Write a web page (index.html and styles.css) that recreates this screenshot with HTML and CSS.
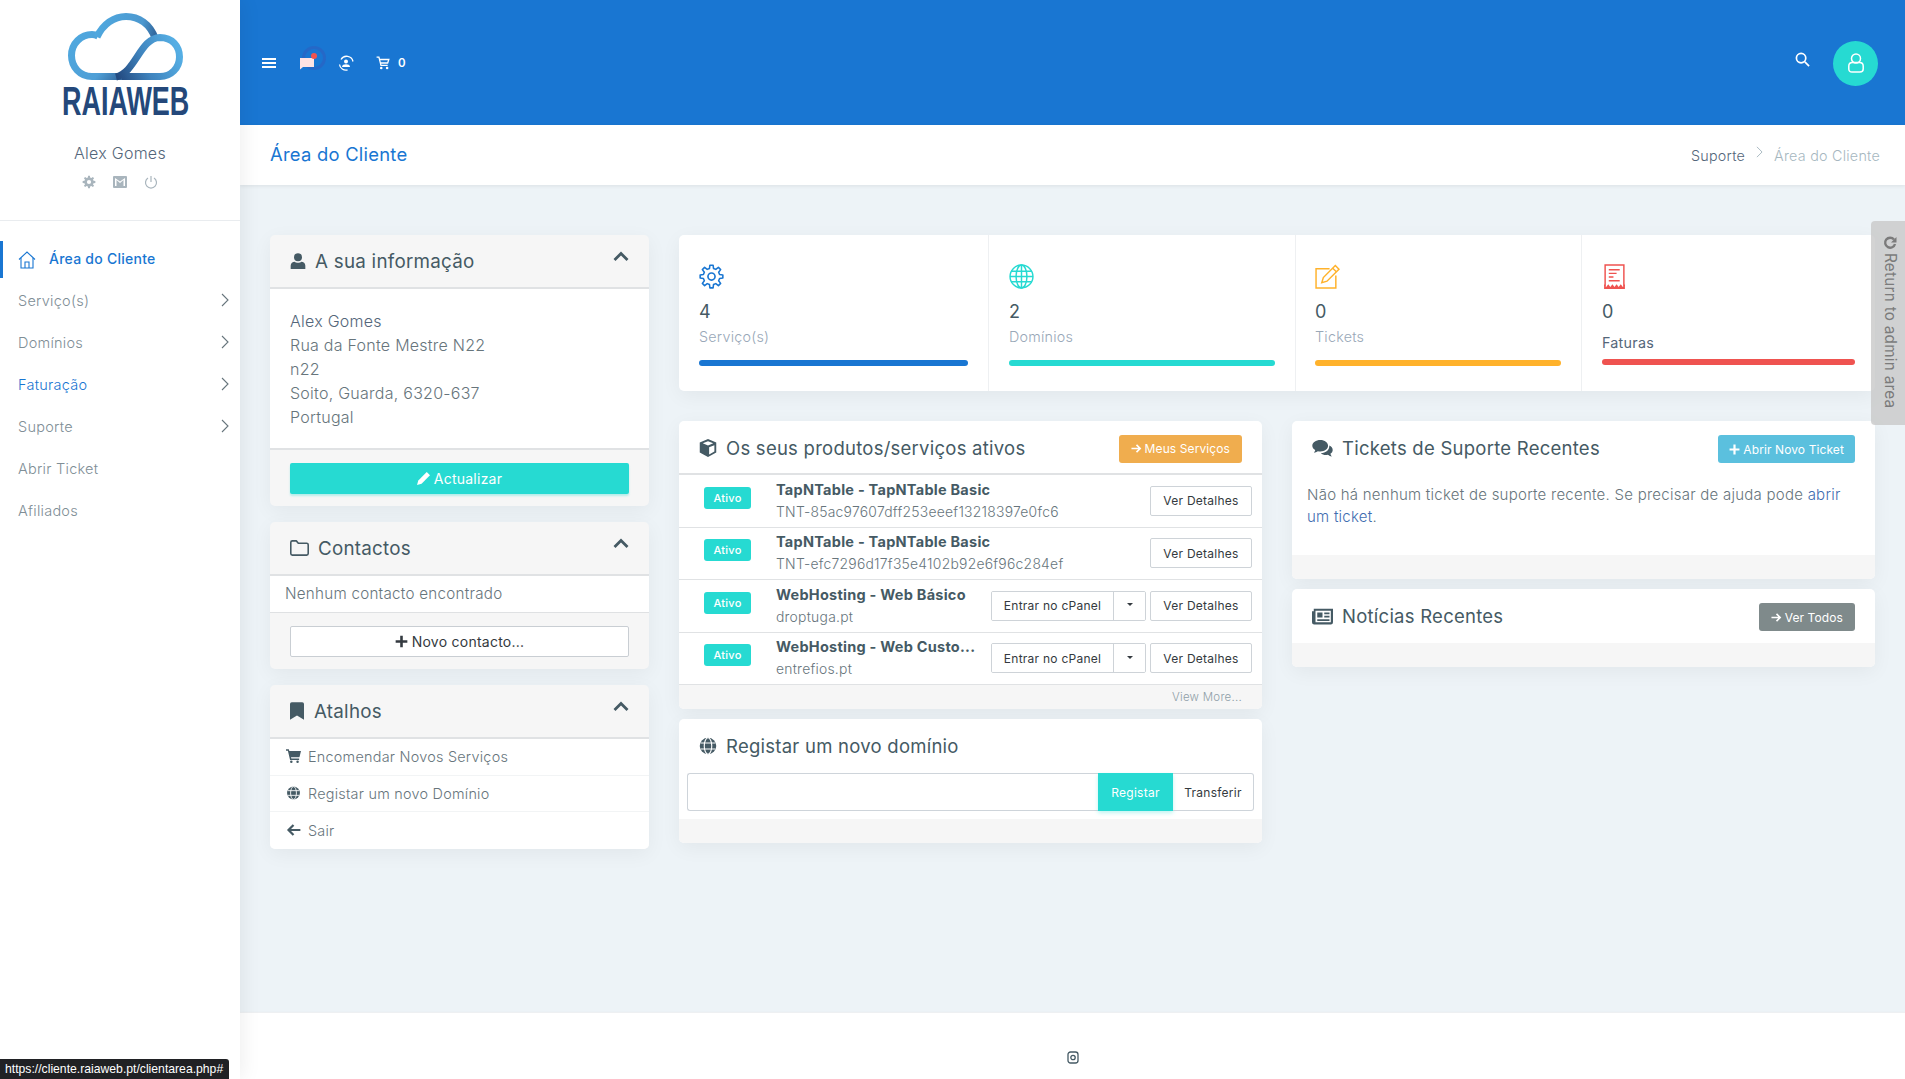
FILE: index.html
```html
<!DOCTYPE html>
<html lang="pt">
<head>
    <meta charset="UTF-8">
    <meta name="viewport" content="width=device-width, initial-scale=1.0">
    <title>Área do Cliente - Raiaweb</title>
    <link rel="stylesheet" href="styles.css">
</head>
<body>
    <!-- icon sprite -->
    <svg class="sprite" aria-hidden="true">
        <symbol id="i-gear" viewBox="0 0 24 24"><path fill-rule="evenodd" d="M10.06 4.24 10.47 1.11H13.53L13.94 4.24 16.12 5.14 18.62 3.22 20.78 5.38 18.86 7.88 19.76 10.06 22.89 10.47V13.53L19.76 13.94 18.86 16.12 20.78 18.62 18.62 20.78 16.12 18.86 13.94 19.76 13.53 22.89H10.47L10.06 19.76 7.88 18.86 5.38 20.78 3.22 18.62 5.14 16.12 4.24 13.94 1.11 13.53V10.47L4.24 10.06 5.14 7.88 3.22 5.38 5.38 3.22 7.88 5.14ZM12 8.4A3.6 3.6 0 1 0 12 15.6 3.6 3.6 0 1 0 12 8.4Z"/></symbol>
        <symbol id="i-gear-line" viewBox="0 0 24 24"><path fill="none" stroke="currentColor" stroke-width="1.5" stroke-linejoin="round" d="M10.06 4.24 10.47 1.11H13.53L13.94 4.24 16.12 5.14 18.62 3.22 20.78 5.38 18.86 7.88 19.76 10.06 22.89 10.47V13.53L19.76 13.94 18.86 16.12 20.78 18.62 18.62 20.78 16.12 18.86 13.94 19.76 13.53 22.89H10.47L10.06 19.76 7.88 18.86 5.38 20.78 3.22 18.62 5.14 16.12 4.24 13.94 1.11 13.53V10.47L4.24 10.06 5.14 7.88 3.22 5.38 5.38 3.22 7.88 5.14Z"/><circle cx="12" cy="12" r="3.4" fill="none" stroke="currentColor" stroke-width="1.6"/></symbol>
        <symbol id="i-globe-line" viewBox="0 0 24 24"><g fill="none" stroke="currentColor" stroke-width="1.4"><circle cx="12" cy="12" r="11"/><ellipse cx="12" cy="12" rx="5.2" ry="11"/><path d="M12 1V23M2.2 7H21.8M1 12H23M2.2 17H21.8"/></g></symbol>
        <symbol id="i-globe" viewBox="0 0 24 24"><circle cx="12" cy="12" r="11"/><g fill="none" stroke="#fff" stroke-width="1.5"><ellipse cx="12" cy="12" rx="5" ry="11"/><path d="M2 8H22M2 16H22"/></g></symbol>
        <symbol id="i-edit" viewBox="0 0 24 24"><g fill="none" stroke="currentColor" stroke-width="1.4"><path d="M14 4.5H1V23H20V11"/><path d="M19.5 1.5 23 5 11.5 16.5 6.5 18 8 13Z"/><path d="M17 4 20.5 7.5"/></g></symbol>
        <symbol id="i-receipt" viewBox="0 0 20 24"><g fill="none" stroke="currentColor" stroke-width="1.4"><path d="M1 21V1H19V21"/><path d="M4.500 5.500H15M4.500 9H12M4.500 12.500H9M4.500 16H15"/></g><path fill="currentColor" d="M0 19 2 22 4 19.500 6 22 8 19.500 10 22 12 19.500 14 22 16 19.500 18 22 20 19V24H0Z"/></symbol>
        <symbol id="i-user" viewBox="0 0 24 24"><circle cx="12" cy="6.500" r="6"/><path d="M1 24V19C1 15 4 13 7 13 9 15 15 15 17 13 20 13 23 15 23 19V24Z"/></symbol>
        <symbol id="i-folder" viewBox="0 0 24 20"><path fill="none" stroke="currentColor" stroke-width="2" stroke-linejoin="round" d="M1 3A2 2 0 0 1 3 1H8L10.500 4H21A2 2 0 0 1 23 6V17A2 2 0 0 1 21 19H3A2 2 0 0 1 1 17Z"/></symbol>
        <symbol id="i-bookmark" viewBox="0 0 16 20"><path d="M2 0H14A2 2 0 0 1 16 2V20L8 15 0 20V2A2 2 0 0 1 2 0Z"/></symbol>
        <symbol id="i-cart" viewBox="0 0 24 22"><path d="M0 0H4.500L5.300 3H24L21.500 13H8L8.500 15H21V17.500H6.500L3 2.500H0Z"/><circle cx="8.500" cy="20" r="2"/><circle cx="18.500" cy="20" r="2"/></symbol>
        <symbol id="i-cart-line" viewBox="0 0 24 24"><g fill="none" stroke="currentColor" stroke-width="2.2"><path d="M1 2H5L8.500 16H20"/><path d="M6 6H22L20 12H7.500"/></g><circle cx="9" cy="20.500" r="2.200"/><circle cx="19" cy="20.500" r="2.200"/></symbol>
        <symbol id="i-arrow-left" viewBox="0 0 24 20"><path fill="none" stroke="currentColor" stroke-width="3.500" d="M12 2 4 10 12 18M4 10H23"/></symbol>
        <symbol id="i-arrow-right" viewBox="0 0 24 20"><path fill="none" stroke="currentColor" stroke-width="3.500" d="M12 2 20 10 12 18M20 10H1"/></symbol>
        <symbol id="i-plus" viewBox="0 0 20 20"><path d="M8 1H12V8H19V12H12V19H8V12H1V8H8Z"/></symbol>
        <symbol id="i-pencil" viewBox="0 0 20 20"><path d="M15 0 20 5 7 18 0 20 2 13Z"/></symbol>
        <symbol id="i-cube" viewBox="0 0 24 24"><path d="M12 0 23 4.500V18L12 24 1 18V4.500ZM12 3 5 5.800 12 8.600 19 5.800ZM13.500 11V20.500L20.500 16.500V8.200Z" fill-rule="evenodd"/></symbol>
        <symbol id="i-comments" viewBox="0 0 24 20"><path d="M9.500 0C14.500 0 18.500 3 18.500 6.800S14.500 13.500 9.500 13.500C8.500 13.500 7.500 13.400 6.600 13.100 5.200 14 3.600 14.700 1.800 15 2.600 14 3.200 13 3.500 11.800 1.400 10.600 0 8.800 0 6.800 0 3 4.200 0 9.500 0Z"/><path d="M20 6.500C22.400 7.600 24 9.500 24 11.700 24 13.500 23 15.100 21.300 16.200 21.500 17.300 22.200 18.500 23 19.500 21.400 19.200 19.600 18.300 18.400 17.300 17.600 17.500 16.800 17.600 16 17.600 13.600 17.600 11.500 16.800 10 15.500 16 15.500 20.500 11.500 20 6.500Z"/></symbol>
        <symbol id="i-news" viewBox="0 0 24 18"><path fill-rule="evenodd" d="M2 0H24V15.500A2.500 2.500 0 0 1 21.500 18H2.500A2.500 2.500 0 0 1 0 15.500V3H2ZM4 2.500V15.500H21.500V2.500ZM6 4.500H12V10H6ZM14 4.500H20V6.500H14ZM14 8H20V10H14ZM6 12H20V14H6Z"/></symbol>
        <symbol id="i-chevron-up" viewBox="0 0 16 10"><path fill="none" stroke="currentColor" stroke-width="2.800" d="M1.500 9 8 2.500 14.500 9"/></symbol>
        <symbol id="i-chevron-right" viewBox="0 0 8 14"><path fill="none" stroke="currentColor" stroke-width="1.100" d="M1 1 7 7 1 13"/></symbol>
    </svg>

    <aside class="sidebar">
        <div class="logo">
            <svg width="130" height="118" viewBox="60 10 130 118">
                <defs>
                    <linearGradient id="cloudA" x1="70" y1="30" x2="135" y2="80" gradientUnits="userSpaceOnUse">
                        <stop offset="0" stop-color="#4fa9e0"/>
                        <stop offset="0.6" stop-color="#4f9fd6"/>
                        <stop offset="1" stop-color="#234a80"/>
                    </linearGradient>
                    <linearGradient id="cloudB" x1="118" y1="77" x2="178" y2="50" gradientUnits="userSpaceOnUse">
                        <stop offset="0" stop-color="#234a80"/>
                        <stop offset="0.45" stop-color="#3f83bd"/>
                        <stop offset="1" stop-color="#55aee4"/>
                    </linearGradient>
                    <linearGradient id="cloudC" x1="95" y1="20" x2="160" y2="36" gradientUnits="userSpaceOnUse">
                        <stop offset="0" stop-color="#4fa9e0"/>
                        <stop offset="0.7" stop-color="#4c98cf"/>
                        <stop offset="1" stop-color="#28568c"/>
                    </linearGradient>
                </defs>
                <path fill="none" stroke="url(#cloudA)" stroke-width="7" d="M126 76.500H92C80 76.500 71.500 67 71.500 55.500 71.500 43.500 81 34.500 92 34.500 94 34.500 96 35 98 36"/>
                <path fill="none" stroke="url(#cloudC)" stroke-width="7" d="M97 37C103 24 114 16.500 126 16.500 139 16.500 150 24 155 38"/>
                <path fill="none" stroke="url(#cloudB)" stroke-width="7" d="M116 77C136 72 140 38 160 37.500 172 37.500 179.500 46 179.500 57 179.500 68 171 76.500 160 76.500H122"/>
                <text class="logo-text" transform="translate(62 115) scale(.658 1)">RAIAWEB</text>
            </svg>
        </div>
        <div class="profile">
            <div class="profile-name">Alex Gomes</div>
            <div class="profile-icons">
                <svg class="ic-14"><use href="#i-gear"/></svg>
                <svg class="ic-14" viewBox="0 0 14 12"><path fill-rule="evenodd" d="M1 0H13A1 1 0 0 1 14 1V11A1 1 0 0 1 13 12H1A1 1 0 0 1 0 11V1A1 1 0 0 1 1 0ZM2 2V10H3.500V4L7 7 10.500 4V10H12V2L7 5.500Z"/></svg>
                <svg class="ic-14" viewBox="0 0 14 14"><g fill="none" stroke="currentColor" stroke-width="1.200"><path d="M7 1V7"/><path d="M4 3A5.500 5.500 0 1 0 10 3"/></g></svg>
            </div>
        </div>
        <nav class="menu">
            <a class="menu-item active">
                <svg class="menu-home" viewBox="0 0 18 18"><g fill="none" stroke="currentColor" stroke-width="1.100"><path d="M1 8.500 9 1 17 8.500"/><path d="M3 7V17H15V7"/><path d="M7 17V11H11V17"/></g></svg>
                Área do Cliente
            </a>
            <a class="menu-item">Serviço(s)<svg class="chev"><use href="#i-chevron-right"/></svg></a>
            <a class="menu-item">Domínios<svg class="chev"><use href="#i-chevron-right"/></svg></a>
            <a class="menu-item blue">Faturação<svg class="chev"><use href="#i-chevron-right"/></svg></a>
            <a class="menu-item">Suporte<svg class="chev"><use href="#i-chevron-right"/></svg></a>
            <a class="menu-item">Abrir Ticket</a>
            <a class="menu-item">Afiliados</a>
        </nav>
    </aside>

    <div class="main">
        <header class="topbar">
            <svg class="top-ic" viewBox="0 0 14 12"><path fill="none" stroke="#fff" stroke-width="2" d="M0 2H14M0 6H14M0 10H14"/></svg>
            <span class="notify">
                <span class="pulse"></span>
                <svg class="top-ic" viewBox="0 0 14 12"><path fill="#ffe3e3" d="M0 1H14V10H3L0 12.500Z"/></svg>
                <span class="dot"></span>
            </span>
            <svg class="top-ic sync-ic" viewBox="0 0 16 16"><g fill="none" stroke="#fff" stroke-width="1.300"><path d="M3 4.500A6.500 6.500 0 0 1 15 6.500"/><path d="M1.500 9.500A6.500 6.500 0 0 0 9.500 15"/></g><circle cx="8" cy="6.500" r="2" fill="#fff"/><path fill="#fff" d="M4 12C4 10 6 9.300 8 9.300S12 10 12 12Z"/></svg>
            <span class="cart">
                <svg class="top-ic cart-ic"><use href="#i-cart-line"/></svg>
                <span class="cart-count">0</span>
            </span>
            <span class="topbar-right">
                <svg class="search-ic" viewBox="0 0 16 16"><g fill="none" stroke="#fff" stroke-width="1.800"><circle cx="6.500" cy="6.500" r="5"/><path d="M10.500 10.500 15 15"/></g></svg>
                <span class="avatar">
                    <svg width="16" height="20" viewBox="0 0 16 20"><g fill="none" stroke="#fff" stroke-width="1.500"><circle cx="8" cy="5.500" r="4.500"/><path d="M4.500 9.500H11.500C14 9.500 15.200 11 15.200 13V16C15.200 18 14 19 12 19H4C2 19 .8 18 .8 16V13C.8 11 2 9.500 4.500 9.500Z"/></g></svg>
                </span>
            </span>
        </header>

        <div class="subbar">
            <h1 class="page-title">Área do Cliente</h1>
            <div class="crumbs">
                <span>Suporte</span>
                <svg class="crumb-sep"><use href="#i-chevron-right"/></svg>
                <span class="crumb-last">Área do Cliente</span>
            </div>
        </div>

        <div class="content">
            <div class="col-left">
                <section class="panel">
                    <div class="panel-head">
                        <svg class="head-ic user-ic"><use href="#i-user"/></svg>
                        <h3>A sua informação</h3>
                        <svg class="collapse"><use href="#i-chevron-up"/></svg>
                    </div>
                    <div class="info-body">
                        <div class="info-name">Alex Gomes</div>
                        <div>Rua da Fonte Mestre N22</div>
                        <div>n22</div>
                        <div>Soito, Guarda, 6320-637</div>
                        <div>Portugal</div>
                    </div>
                    <div class="panel-foot">
                        <a class="wide-btn teal"><svg class="ic-13"><use href="#i-pencil"/></svg>Actualizar</a>
                    </div>
                </section>

                <section class="panel">
                    <div class="panel-head">
                        <svg class="head-ic folder-ic"><use href="#i-folder"/></svg>
                        <h3>Contactos</h3>
                        <svg class="collapse"><use href="#i-chevron-up"/></svg>
                    </div>
                    <div class="empty-row">Nenhum contacto encontrado</div>
                    <div class="panel-foot">
                        <a class="wide-btn outline"><svg class="ic-13"><use href="#i-plus"/></svg>Novo contacto...</a>
                    </div>
                </section>

                <section class="panel">
                    <div class="panel-head">
                        <svg class="head-ic bookmark-ic"><use href="#i-bookmark"/></svg>
                        <h3>Atalhos</h3>
                        <svg class="collapse"><use href="#i-chevron-up"/></svg>
                    </div>
                    <a class="link-row"><svg class="row-ic"><use href="#i-cart"/></svg>Encomendar Novos Serviços</a>
                    <a class="link-row"><svg class="row-ic"><use href="#i-globe"/></svg>Registar um novo Domínio</a>
                    <a class="link-row"><svg class="row-ic"><use href="#i-arrow-left"/></svg>Sair</a>
                </section>
            </div>

            <div class="col-right">
                <section class="stats">
                    <div class="stat">
                        <svg class="stat-ic c-blue"><use href="#i-gear-line"/></svg>
                        <div class="stat-num">4</div>
                        <div class="stat-label">Serviço(s)</div>
                        <div class="bar bg-blue"></div>
                    </div>
                    <div class="stat">
                        <svg class="stat-ic c-teal"><use href="#i-globe-line"/></svg>
                        <div class="stat-num">2</div>
                        <div class="stat-label">Domínios</div>
                        <div class="bar bg-teal"></div>
                    </div>
                    <div class="stat">
                        <svg class="stat-ic c-orange"><use href="#i-edit"/></svg>
                        <div class="stat-num">0</div>
                        <div class="stat-label">Tickets</div>
                        <div class="bar bg-orange"></div>
                    </div>
                    <div class="stat stat-dark">
                        <svg class="stat-ic c-red"><use href="#i-receipt"/></svg>
                        <div class="stat-num">0</div>
                        <div class="stat-label">Faturas</div>
                        <div class="bar bg-red"></div>
                    </div>
                </section>

                <div class="cards">
                    <div class="stack">
                        <section class="panel white">
                            <div class="card-head ruled">
                                <svg class="card-ic"><use href="#i-cube"/></svg>
                                <h3>Os seus produtos/serviços ativos</h3>
                                <a class="small-btn orange"><svg class="ic-11"><use href="#i-arrow-right"/></svg>Meus Serviços</a>
                            </div>
                            <div class="product">
                                <span class="badge">Ativo</span>
                                <div class="product-text">
                                    <b>TapNTable - TapNTable Basic</b>
                                    <span>TNT-85ac97607dff253eeef13218397e0fc6</span>
                                </div>
                                <a class="btn">Ver Detalhes</a>
                            </div>
                            <div class="product">
                                <span class="badge">Ativo</span>
                                <div class="product-text">
                                    <b>TapNTable - TapNTable Basic</b>
                                    <span>TNT-efc7296d17f35e4102b92e6f96c284ef</span>
                                </div>
                                <a class="btn">Ver Detalhes</a>
                            </div>
                            <div class="product">
                                <span class="badge">Ativo</span>
                                <div class="product-text">
                                    <b>WebHosting - Web Básico</b>
                                    <span>droptuga.pt</span>
                                </div>
                                <div class="btn-split">
                                    <a class="btn-main">Entrar no cPanel</a>
                                    <a class="btn-caret"><i></i></a>
                                </div>
                                <a class="btn">Ver Detalhes</a>
                            </div>
                            <div class="product">
                                <span class="badge">Ativo</span>
                                <div class="product-text">
                                    <b>WebHosting - Web Custo...</b>
                                    <span>entrefios.pt</span>
                                </div>
                                <div class="btn-split">
                                    <a class="btn-main">Entrar no cPanel</a>
                                    <a class="btn-caret"><i></i></a>
                                </div>
                                <a class="btn">Ver Detalhes</a>
                            </div>
                            <div class="view-more">View More...</div>
                        </section>

                        <section class="panel white">
                            <div class="card-head">
                                <svg class="card-ic"><use href="#i-globe"/></svg>
                                <h3>Registar um novo domínio</h3>
                            </div>
                            <div class="domain-form">
                                <input class="domain-input" type="text">
                                <a class="domain-reg">Registar</a>
                                <a class="domain-transfer">Transferir</a>
                            </div>
                            <div class="card-foot"></div>
                        </section>
                    </div>

                    <div class="stack">
                        <section class="panel white">
                            <div class="card-head">
                                <svg class="card-ic wide"><use href="#i-comments"/></svg>
                                <h3>Tickets de Suporte Recentes</h3>
                                <a class="small-btn info"><svg class="ic-11"><use href="#i-plus"/></svg>Abrir Novo Ticket</a>
                            </div>
                            <p class="card-text">Não há nenhum ticket de suporte recente. Se precisar de ajuda pode <a>abrir um ticket</a>.</p>
                            <div class="card-foot"></div>
                        </section>
                        <section class="panel white">
                            <div class="card-head">
                                <svg class="card-ic wide"><use href="#i-news"/></svg>
                                <h3>Notícias Recentes</h3>
                                <a class="small-btn grey"><svg class="ic-11"><use href="#i-arrow-right"/></svg>Ver Todos</a>
                            </div>
                            <div class="card-foot"></div>
                        </section>
                    </div>
                </div>
            </div>
        </div>

        <footer class="footer">
            <svg width="12" height="13" viewBox="0 0 12 13"><g fill="none" stroke="#455a64" stroke-width="1.300"><rect x="1" y="1" width="10" height="11" rx="2.500"/><circle cx="6" cy="6.500" r="2.200"/></g></svg>
        </footer>
    </div>

    <a class="admin-tab">
        <svg width="14" height="14" viewBox="0 0 14 14"><path fill="none" stroke="currentColor" stroke-width="2.400" d="M11 3.500A5 5 0 1 0 12 8"/><path fill="currentColor" d="M13.500 1V6.500H8Z"/></svg>
        Return to admin area
    </a>
    <div class="status-link">https://cliente.raiaweb.pt/clientarea.php#</div>
</body>
</html>
```

FILE: styles.css
```css
* {
    margin: 0;
    padding: 0;
    box-sizing: border-box;
}

html, body {
    height: 100%;
    overflow: hidden;
}

body {
    display: flex;
    font-family: 'Inter', 'Liberation Sans', sans-serif;
    font-size: 14px;
    font-weight: 300;
    letter-spacing: 0.25px;
    color: #67757c;
    background: #edf3f7;
}

a {
    text-decoration: none;
    color: inherit;
}

svg {
    fill: currentColor;
    flex: none;
}

.sprite {
    display: none;
}

/* sidebar */
.sidebar {
    width: 240px;
    flex: none;
    background: white;
    box-shadow: 1px 0 20px rgba(0,0,0,0.08);
    z-index: 2;
}

.logo {
    height: 126px;
    padding: 10px 0 0 60px;
}

.logo svg {
    display: block;
}

.logo-text {
    font-family: 'Liberation Sans', sans-serif;
    font-weight: bold;
    font-size: 41px;
    letter-spacing: 0;
    fill: #24487a;
}

.profile {
    height: 95px;
    border-bottom: 1px solid #e9ecef;
    text-align: center;
}

.profile-name {
    padding-top: 16px;
    font-size: 16px;
    line-height: 22px;
    color: #54667a;
}

.profile-icons {
    display: flex;
    justify-content: center;
    gap: 17px;
    margin-top: 11px;
    color: #a9b5bd;
}

.ic-14 {
    width: 14px;
    height: 14px;
}

.menu {
    padding-top: 20px;
}

.menu-item {
    display: flex;
    align-items: center;
    height: 41.900px;
    padding: 0 11px 0 18px;
    font-size: 14.500px;
    color: #808e96;
}

.menu-item.active {
    height: 37px;
    margin-bottom: 2px;
    border-left: 3px solid #1976d2;
    padding: 0 11px 2px 15px;
    font-size: 14px;
    color: #1976d2;
    font-weight: 500;
}

.menu-item.blue {
    color: #1976d2;
}

.menu-home {
    width: 18px;
    height: 18px;
    margin-right: 13px;
    margin-top: 3px;
}

.chev {
    width: 8px;
    height: 14px;
    margin-left: auto;
    margin-top: -2px;
    color: #67757c;
}

/* main column */
.main {
    flex: 1;
    display: flex;
    flex-direction: column;
    min-width: 0;
    height: 100%;
}

.topbar {
    height: 125px;
    flex: none;
    display: flex;
    align-items: center;
    gap: 24px;
    padding: 1px 27px 0 22px;
    background: #1976d2;
    color: white;
}

.top-ic {
    display: block;
    width: 14px;
    height: 14px;
}

.sync-ic {
    width: 16px;
    height: 16px;
    margin: 0 -2px 0 0;
}

.notify {
    position: relative;
    display: block;
}

.notify .top-ic {
    position: relative;
}

.pulse {
    position: absolute;
    top: -10px;
    left: 2px;
    width: 24px;
    height: 24px;
    border-radius: 50%;
    border: 3px solid rgba(60,80,180,0.35);
}

.dot {
    position: absolute;
    top: -3px;
    left: 11px;
    width: 6px;
    height: 6px;
    border-radius: 50%;
    background: #ef5350;
}

.cart {
    display: flex;
    align-items: center;
    gap: 8px;
}

.cart-count {
    font-size: 11.500px;
    font-weight: 600;
}

.topbar-right {
    margin-left: auto;
    display: flex;
    align-items: center;
    gap: 23px;
}

.search-ic {
    width: 15px;
    height: 15px;
    margin-top: -7px;
}

.avatar {
    width: 45px;
    height: 45px;
    border-radius: 50%;
    background: #26dad2;
    display: flex;
    align-items: center;
    justify-content: center;
}

.subbar {
    height: 60px;
    flex: none;
    display: flex;
    align-items: center;
    justify-content: space-between;
    padding: 0 25px 0 30px;
    background: white;
    box-shadow: 0 1px 4px rgba(0,0,0,0.08);
}

.page-title {
    font-size: 18.400px;
    font-weight: 400;
    color: #1976d2;
    margin-top: -2px;
}

.crumbs {
    display: flex;
    align-items: center;
    gap: 11px;
    font-size: 14.300px;
    color: #54667a;
}

.crumb-sep {
    width: 7px;
    height: 12px;
    margin-top: -6px;
    color: #a6b7bf;
}

.crumb-last {
    color: #a6b7bf;
}

.content {
    flex: 1;
    display: flex;
    gap: 30px;
    padding: 50px 30px 0;
    align-items: flex-start;
}

.col-left {
    width: 379px;
    flex: none;
    display: flex;
    flex-direction: column;
    gap: 16px;
}

.col-right {
    flex: 1;
    min-width: 0;
}

/* panels */
.panel {
    background: #f6f6f6;
    border-radius: 5px;
    box-shadow: 0 5px 20px rgba(0,0,0,0.05);
    overflow: hidden;
}

.panel.white {
    background: white;
}

.panel-head {
    height: 54px;
    display: flex;
    align-items: center;
    padding: 0 20px;
    border-bottom: 2px solid #e0e2e4;
    color: #455a64;
}

.panel-head h3 {
    flex: 1;
    font-size: 18.800px;
    font-weight: 400;
}

.head-ic {
    margin-right: 9px;
}

.user-ic {
    width: 16px;
    height: 18px;
}

.folder-ic {
    width: 19px;
    height: 16px;
    margin-right: 9px;
}

.bookmark-ic {
    width: 14px;
    height: 18px;
    margin-right: 10px;
}

.collapse {
    width: 16px;
    height: 10px;
    margin-top: -10px;
}

.info-body {
    padding: 20px 20px 19px;
    background: white;
    border-bottom: 2px solid #e0e2e4;
    font-size: 16px;
    line-height: 24px;
}

.info-name {
    color: #54667a;
}

.panel-foot {
    padding: 13px 20px 12px;
}

.wide-btn {
    display: flex;
    align-items: center;
    justify-content: center;
    gap: 4px;
    height: 31px;
    border-radius: 2px;
    font-weight: 400;
}

.wide-btn.teal {
    background: #26dad2;
    color: white;
    box-shadow: 0 2px 2px rgba(38,218,210,0.3);
}

.wide-btn.outline {
    background: white;
    border: 1px solid #c9ced3;
    color: #343a40;
}

.ic-13 {
    width: 13px;
    height: 13px;
}

.empty-row {
    height: 37px;
    display: flex;
    align-items: center;
    padding: 0 0 1px 15px;
    background: white;
    border-bottom: 1px solid #dfe1e3;
    font-size: 15.200px;
}

.link-row {
    display: flex;
    align-items: center;
    height: 36.700px;
    padding: 0 0 1px 16px;
    background: white;
    border-bottom: 1px solid #f2f4f5;
    font-size: 14.400px;
}

.link-row:last-child {
    border-bottom: none;
}

.row-ic {
    width: 15px;
    height: 14px;
    margin-right: 7px;
    color: #455a64;
}

/* stat row */
.stats {
    height: 156px;
    display: grid;
    grid-template-columns: 309px 307px 286px 1fr;
    background: white;
    border-radius: 5px;
    box-shadow: 0 5px 20px rgba(0,0,0,0.05);
}

.stat {
    padding: 29px 20px 0;
    border-left: 1px solid #eef0f2;
}

.stat:first-child {
    border-left: none;
}

.stat:nth-child(3) {
    padding-left: 19px;
}

.stat-ic {
    display: block;
    width: 25px;
    height: 25px;
}

.stat-num {
    margin-top: 11px;
    font-size: 18px;
    font-weight: 400;
    line-height: 24px;
    color: #455a64;
}

.stat-label {
    margin-top: 1px;
    font-size: 14.300px;
    line-height: 24px;
    color: #99a8b8;
}

.stat-dark .stat-label {
    margin-top: 7px;
    font-weight: 400;
    color: #54667a;
}

.stat-dark .bar {
    margin-top: 4px;
}

.bar {
    height: 6px;
    margin-top: 11px;
    border-radius: 3px;
}

.c-blue { color: #1976d2; }
.c-teal { color: #26dad2; }
.c-orange { color: #ffb22b; }
.c-red { color: #ef5350; }
.bg-blue { background: #1976d2; }
.bg-teal { background: #26dad2; }
.bg-orange { background: #ffb22b; }
.bg-red { background: #ef5350; }

/* cards */
.cards {
    display: grid;
    grid-template-columns: 1fr 1fr;
    gap: 30px;
    margin-top: 30px;
    align-items: start;
}

.stack {
    display: flex;
    flex-direction: column;
    gap: 10px;
}

.card-head {
    height: 54px;
    display: flex;
    align-items: center;
    padding: 2px 20px 0;
    color: #455a64;
}

.card-head.ruled {
    padding-top: 3px;
    border-bottom: 2px solid #e0e2e4;
}

.card-head h3 {
    flex: 1;
    font-size: 18.500px;
    font-weight: 400;
    margin-top: -2px;
}

.card-ic {
    width: 18px;
    height: 18px;
    margin-right: 9px;
    margin-top: -2px;
}

.card-ic.wide {
    width: 21px;
    height: 17px;
    margin-right: 9px;
}

.small-btn {
    display: flex;
    align-items: center;
    gap: 3px;
    height: 28px;
    padding: 0 12px;
    border-radius: 3px;
    font-size: 12px;
    font-weight: 400;
    letter-spacing: 0.1px;
    color: white;
}

.small-btn.orange { background: #f0ad4e; }
.small-btn.info { background: #5bc0de; padding: 0 11px; }
.small-btn.grey { background: #7f8a8b; }

.ic-11 {
    width: 11px;
    height: 11px;
}

.product {
    height: 52.500px;
    display: flex;
    align-items: center;
    gap: 4px;
    padding: 0 10px 0 25px;
    border-bottom: 1px solid #e0e2e4;
}

.badge {
    width: 47px;
    height: 22px;
    margin-right: 21px;
    margin-top: -6px;
    border-radius: 3px;
    background: #26dad2;
    color: white;
    font-size: 11px;
    font-weight: 500;
    line-height: 22px;
    text-align: center;
}

.product-text {
    flex: 1;
    min-width: 0;
    display: flex;
    flex-direction: column;
    white-space: nowrap;
    line-height: 22px;
}

.product-text b {
    color: #455a64;
    font-weight: 700;
    font-size: 14.500px;
}

.product-text span {
    font-size: 13.900px;
}

.btn,
.btn-main,
.btn-caret {
    display: flex;
    align-items: center;
    justify-content: center;
    height: 30px;
    font-size: 12px;
    font-weight: 400;
    color: #343a40;
    background: white;
}

.btn {
    width: 102px;
    border: 1px solid #ced3d8;
    border-radius: 2px;
}

.btn-split {
    display: flex;
    width: 155px;
    height: 30px;
    border: 1px solid #ced3d8;
    border-radius: 2px;
    overflow: hidden;
}

.btn-main {
    flex: 1;
    height: 28px;
    border-right: 1px solid #ced3d8;
}

.btn-caret {
    width: 31px;
    height: 28px;
}

.btn-caret i {
    border: 3px solid transparent;
    border-top-color: #343a40;
    border-bottom: none;
    margin-top: -2px;
}

.view-more {
    height: 24px;
    padding-right: 20px;
    background: #f6f6f6;
    font-size: 11.500px;
    line-height: 24px;
    text-align: right;
    color: #8f9fa8;
}

.domain-form {
    display: flex;
    height: 38px;
    margin: 0 8px 8px;
}

.domain-input {
    flex: 1;
    min-width: 0;
    border: 1px solid #ced4da;
    border-right: none;
    border-radius: 3px 0 0 3px;
}

.domain-reg,
.domain-transfer {
    display: flex;
    align-items: center;
    justify-content: center;
    font-size: 12px;
    font-weight: 400;
}

.domain-reg {
    width: 75px;
    background: #26dad2;
    color: white;
    box-shadow: 0 2px 4px rgba(38,218,210,0.3);
}

.domain-transfer {
    width: 81px;
    border: 1px solid #ced4da;
    border-left: none;
    border-radius: 0 3px 3px 0;
    color: #343a40;
}

.card-foot {
    height: 24px;
    background: #f6f6f6;
}

.card-text {
    padding: 9px 15px 24px;
    font-size: 15px;
    line-height: 22px;
    height: 80px;
}

.card-text a {
    color: #3f6db0;
}

/* footer */
.footer {
    height: 67px;
    flex: none;
    background: white;
    border-top: 1px solid #eef0f2;
    padding: 38px 0 0 827px;
    box-shadow: 0 -1px 2px rgba(0,0,0,0.01);
}

.footer svg {
    display: block;
}

/* things on top */
.admin-tab {
    position: absolute;
    top: 221px;
    right: 0;
    width: 34px;
    height: 204px;
    padding: 15px 0 0 4px;
    display: flex;
    align-items: center;
    gap: 3px;
    writing-mode: vertical-rl;
    background: rgba(200,200,200,0.8);
    border-radius: 4px 0 0 4px;
    font-size: 15.300px;
    font-weight: 400;
    color: #7b7b7b;
    white-space: nowrap;
}

.status-link {
    position: absolute;
    left: 0;
    bottom: 0;
    width: 229px;
    height: 20px;
    padding-left: 5px;
    background: #202124;
    border-radius: 0 3px 0 0;
    color: white;
    font-family: 'Liberation Sans', sans-serif;
    font-size: 12.200px;
    font-weight: 400;
    letter-spacing: 0;
    line-height: 20px;
    white-space: nowrap;
    z-index: 3;
}
```
